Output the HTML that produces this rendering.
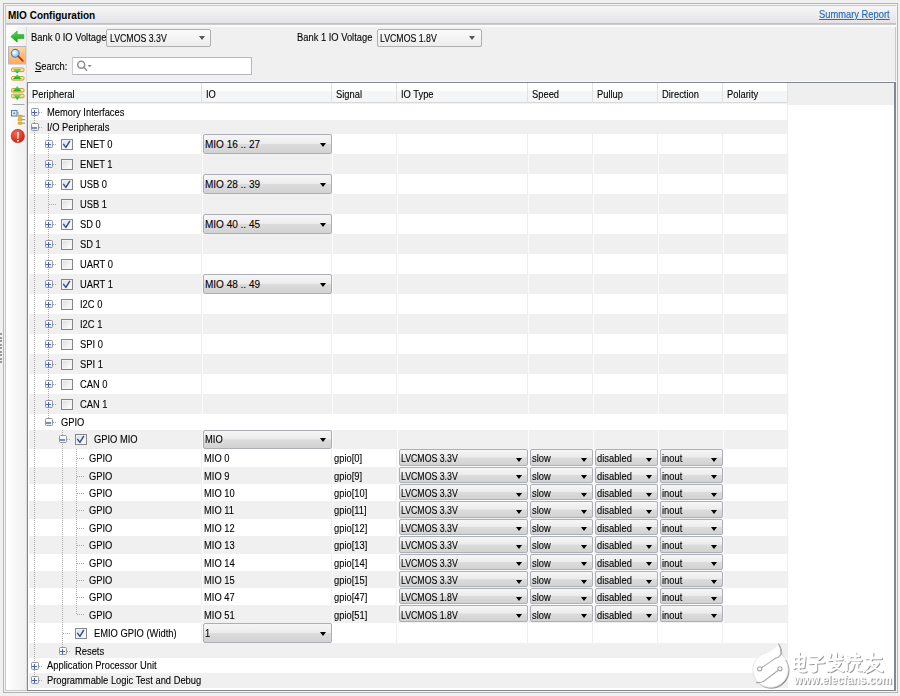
<!DOCTYPE html><html><head><meta charset="utf-8"><style>
html,body{margin:0;padding:0;}
body{width:900px;height:696px;overflow:hidden;background:#f0f0f0;position:relative;font-family:"Liberation Sans", sans-serif;color:#000;}
div{position:absolute;box-sizing:border-box;}
.t{white-space:nowrap;transform-origin:0 50%;-webkit-text-stroke:0.1px #000;}
.dd{border:1px solid #acafb6;border-radius:2px;background:linear-gradient(#f6f6f6 0%,#ececec 48%,#dcdcdc 52%,#d2d2d2 100%);}
.ar{width:0;height:0;border-left:3.5px solid transparent;border-right:3.5px solid transparent;border-top:4px solid #000;}
.dl{background-image:linear-gradient(#aaaaaa 50%,transparent 50%);background-size:1px 2px;width:1px;}
.dh{background-image:linear-gradient(90deg,#aaaaaa 50%,transparent 50%);background-size:2px 1px;height:1px;}
.ex{width:8px;height:8px;border:1px solid #959595;border-radius:1.5px;background:linear-gradient(#ffffff,#ececec);}
.cb{width:12px;height:11px;border:1px solid #858686;box-shadow:inset 0 0 0 1px #f4f4f4;background:linear-gradient(135deg,#dcdcdc,#f6f6f6 70%,#ffffff);}

</style></head><body>
<div style="left:3px;top:3px;width:895px;height:690px;border:1px solid #b4b4b4;"></div>
<div style="left:4px;top:4px;width:893px;height:688px;border:1px solid #f4f4f4;"></div>
<div style="left:5px;top:5px;width:891px;height:686px;border:1px solid #c8c8c8;"></div>
<div style="left:6px;top:6px;width:890px;height:17px;background:linear-gradient(#f6f6f6,#e4e4e8);"></div>
<div style="left:6px;top:23px;width:890px;height:1px;background:#c2c2c2;"></div>
<div style="left:6px;top:24px;width:890px;height:1px;background:#cbcbcb;"></div>
<div style="left:6px;top:25px;width:890px;height:2px;background:#fafafa;"></div>
<div class="t" style="left:8px;top:6px;line-height:20px;font-size:10px;transform:scaleX(1);font-weight:bold;color:#000;-webkit-text-stroke:0;">MIO Configuration</div>
<div class="t" style="left:819px;top:5px;line-height:20px;font-size:10px;transform:scaleX(0.935);color:#2a6ab8;text-decoration:underline;-webkit-text-stroke:0.15px #2a6ab8;">Summary Report</div>
<div style="left:6px;top:27px;width:20px;height:663px;background:linear-gradient(90deg,#ffffff,#f0f0f0);"></div>
<div style="left:26px;top:27px;width:1px;height:663px;background:#dcdcdc;"></div>
<div class="t" style="left:30.5px;top:28px;line-height:20px;font-size:10px;transform:scaleX(0.935);">Bank 0 IO Voltage</div>
<div style="left:106px;top:29px;width:105px;height:18px;border:1px solid #b0b0b0;background:linear-gradient(#fbfbfb,#ececec);border-radius:2px;"></div>
<div class="t" style="left:109.5px;top:29px;line-height:20px;font-size:10px;transform:scaleX(0.875);">LVCMOS 3.3V</div>
<div class="ar" style="left:199px;top:36px;border-top-color:#555;border-left-width:3.5px;border-right-width:3.5px;"></div>
<div class="t" style="left:297px;top:28px;line-height:20px;font-size:10px;transform:scaleX(0.935);">Bank 1 IO Voltage</div>
<div style="left:377px;top:29px;width:105px;height:18px;border:1px solid #b0b0b0;background:linear-gradient(#fbfbfb,#ececec);border-radius:2px;"></div>
<div class="t" style="left:380px;top:29px;line-height:20px;font-size:10px;transform:scaleX(0.875);">LVCMOS 1.8V</div>
<div class="ar" style="left:469px;top:36px;border-top-color:#555;"></div>
<div class="t" style="left:35px;top:57px;line-height:20px;font-size:10px;transform:scaleX(0.935);"><u>S</u>earch:</div>
<div style="left:72px;top:57px;width:180px;height:18px;border:1px solid #b4b7be;border-left-color:#c8ccd2;background:#fff;border-radius:1px;"></div>
<svg style="position:absolute;left:75px;top:59px" width="20" height="14"><circle cx="6.2" cy="5.7" r="3.5" fill="none" stroke="#8e8e8e" stroke-width="1.5"/><line x1="8.8" y1="8.3" x2="11.6" y2="11.2" stroke="#8e8e8e" stroke-width="1.5" stroke-linecap="round"/><path d="M12.5 5.9 L16.8 5.9 L14.65 8.2 Z" fill="#8a8a8a"/></svg>
<div style="left:27px;top:81px;width:869px;height:1px;background:#fafafa;"></div>
<div style="left:27px;top:82px;width:869px;height:609px;border:1px solid #82878f;border-right-width:2px;background:#fff;"></div>
<div style="left:28px;top:83px;width:866px;height:22px;background:#efefef;"></div>
<div style="left:28px;top:83px;width:173px;height:8px;background:#ffffff;"></div>
<div style="left:28px;top:91px;width:173px;height:11px;background:#f4f5f7;"></div>
<div style="left:28px;top:102px;width:174px;height:1px;background:#d8d8d8;"></div>
<div style="left:201px;top:83px;width:1px;height:20px;background:#e2e2e2;"></div>
<div class="t" style="left:31.5px;top:85px;line-height:20px;font-size:10px;transform:scaleX(0.935);">Peripheral</div>
<div style="left:202px;top:83px;width:129px;height:8px;background:#ffffff;"></div>
<div style="left:202px;top:91px;width:129px;height:11px;background:#f4f5f7;"></div>
<div style="left:202px;top:102px;width:130px;height:1px;background:#d8d8d8;"></div>
<div style="left:331px;top:83px;width:1px;height:20px;background:#e2e2e2;"></div>
<div class="t" style="left:205.5px;top:85px;line-height:20px;font-size:10px;transform:scaleX(0.935);">IO</div>
<div style="left:332px;top:83px;width:64px;height:8px;background:#ffffff;"></div>
<div style="left:332px;top:91px;width:64px;height:11px;background:#f4f5f7;"></div>
<div style="left:332px;top:102px;width:65px;height:1px;background:#d8d8d8;"></div>
<div style="left:396px;top:83px;width:1px;height:20px;background:#e2e2e2;"></div>
<div class="t" style="left:335.5px;top:85px;line-height:20px;font-size:10px;transform:scaleX(0.935);">Signal</div>
<div style="left:397px;top:83px;width:130px;height:8px;background:#ffffff;"></div>
<div style="left:397px;top:91px;width:130px;height:11px;background:#f4f5f7;"></div>
<div style="left:397px;top:102px;width:131px;height:1px;background:#d8d8d8;"></div>
<div style="left:527px;top:83px;width:1px;height:20px;background:#e2e2e2;"></div>
<div class="t" style="left:400.5px;top:85px;line-height:20px;font-size:10px;transform:scaleX(0.935);">IO Type</div>
<div style="left:528px;top:83px;width:64px;height:8px;background:#ffffff;"></div>
<div style="left:528px;top:91px;width:64px;height:11px;background:#f4f5f7;"></div>
<div style="left:528px;top:102px;width:65px;height:1px;background:#d8d8d8;"></div>
<div style="left:592px;top:83px;width:1px;height:20px;background:#e2e2e2;"></div>
<div class="t" style="left:531.5px;top:85px;line-height:20px;font-size:10px;transform:scaleX(0.935);">Speed</div>
<div style="left:593px;top:83px;width:64px;height:8px;background:#ffffff;"></div>
<div style="left:593px;top:91px;width:64px;height:11px;background:#f4f5f7;"></div>
<div style="left:593px;top:102px;width:65px;height:1px;background:#d8d8d8;"></div>
<div style="left:657px;top:83px;width:1px;height:20px;background:#e2e2e2;"></div>
<div class="t" style="left:596.5px;top:85px;line-height:20px;font-size:10px;transform:scaleX(0.935);">Pullup</div>
<div style="left:658px;top:83px;width:64px;height:8px;background:#ffffff;"></div>
<div style="left:658px;top:91px;width:64px;height:11px;background:#f4f5f7;"></div>
<div style="left:658px;top:102px;width:65px;height:1px;background:#d8d8d8;"></div>
<div style="left:722px;top:83px;width:1px;height:20px;background:#e2e2e2;"></div>
<div class="t" style="left:661.5px;top:85px;line-height:20px;font-size:10px;transform:scaleX(0.935);">Direction</div>
<div style="left:723px;top:83px;width:64px;height:8px;background:#ffffff;"></div>
<div style="left:723px;top:91px;width:64px;height:11px;background:#f4f5f7;"></div>
<div style="left:723px;top:102px;width:65px;height:1px;background:#d8d8d8;"></div>
<div style="left:787px;top:83px;width:1px;height:20px;background:#e2e2e2;"></div>
<div class="t" style="left:726.5px;top:85px;line-height:20px;font-size:10px;transform:scaleX(0.935);">Polarity</div>
<div style="left:28px;top:103px;width:760px;height:1px;background:#f2f2f2;"></div>
<div style="left:29px;top:104px;width:759px;height:15.5px;background:#ffffff;"></div>
<div style="left:787px;top:104px;width:1px;height:15.5px;background:#ededed;"></div>
<div style="left:29px;top:119.5px;width:759px;height:14.5px;background:#f0f0f0;"></div>
<div style="left:29px;top:134px;width:759px;height:20px;background:#ffffff;"></div>
<div style="left:787px;top:134px;width:1px;height:20px;background:#ededed;"></div>
<div style="left:201px;top:134px;width:1px;height:20px;background:#efefef;"></div>
<div style="left:331px;top:134px;width:1px;height:20px;background:#efefef;"></div>
<div style="left:396px;top:134px;width:1px;height:20px;background:#efefef;"></div>
<div style="left:527px;top:134px;width:1px;height:20px;background:#efefef;"></div>
<div style="left:592px;top:134px;width:1px;height:20px;background:#efefef;"></div>
<div style="left:657px;top:134px;width:1px;height:20px;background:#efefef;"></div>
<div style="left:722px;top:134px;width:1px;height:20px;background:#efefef;"></div>
<div style="left:787px;top:134px;width:1px;height:20px;background:#efefef;"></div>
<div style="left:29px;top:154px;width:759px;height:20px;background:#f0f0f0;"></div>
<div style="left:202px;top:154px;width:1px;height:20px;background:#fbfbfb;"></div>
<div style="left:332px;top:154px;width:1px;height:20px;background:#fbfbfb;"></div>
<div style="left:397px;top:154px;width:1px;height:20px;background:#fbfbfb;"></div>
<div style="left:528px;top:154px;width:1px;height:20px;background:#fbfbfb;"></div>
<div style="left:593px;top:154px;width:1px;height:20px;background:#fbfbfb;"></div>
<div style="left:658px;top:154px;width:1px;height:20px;background:#fbfbfb;"></div>
<div style="left:723px;top:154px;width:1px;height:20px;background:#fbfbfb;"></div>
<div style="left:788px;top:154px;width:1px;height:20px;background:#fbfbfb;"></div>
<div style="left:29px;top:174px;width:759px;height:20px;background:#ffffff;"></div>
<div style="left:787px;top:174px;width:1px;height:20px;background:#ededed;"></div>
<div style="left:201px;top:174px;width:1px;height:20px;background:#efefef;"></div>
<div style="left:331px;top:174px;width:1px;height:20px;background:#efefef;"></div>
<div style="left:396px;top:174px;width:1px;height:20px;background:#efefef;"></div>
<div style="left:527px;top:174px;width:1px;height:20px;background:#efefef;"></div>
<div style="left:592px;top:174px;width:1px;height:20px;background:#efefef;"></div>
<div style="left:657px;top:174px;width:1px;height:20px;background:#efefef;"></div>
<div style="left:722px;top:174px;width:1px;height:20px;background:#efefef;"></div>
<div style="left:787px;top:174px;width:1px;height:20px;background:#efefef;"></div>
<div style="left:29px;top:194px;width:759px;height:20px;background:#f0f0f0;"></div>
<div style="left:202px;top:194px;width:1px;height:20px;background:#fbfbfb;"></div>
<div style="left:332px;top:194px;width:1px;height:20px;background:#fbfbfb;"></div>
<div style="left:397px;top:194px;width:1px;height:20px;background:#fbfbfb;"></div>
<div style="left:528px;top:194px;width:1px;height:20px;background:#fbfbfb;"></div>
<div style="left:593px;top:194px;width:1px;height:20px;background:#fbfbfb;"></div>
<div style="left:658px;top:194px;width:1px;height:20px;background:#fbfbfb;"></div>
<div style="left:723px;top:194px;width:1px;height:20px;background:#fbfbfb;"></div>
<div style="left:788px;top:194px;width:1px;height:20px;background:#fbfbfb;"></div>
<div style="left:29px;top:214px;width:759px;height:20px;background:#ffffff;"></div>
<div style="left:787px;top:214px;width:1px;height:20px;background:#ededed;"></div>
<div style="left:201px;top:214px;width:1px;height:20px;background:#efefef;"></div>
<div style="left:331px;top:214px;width:1px;height:20px;background:#efefef;"></div>
<div style="left:396px;top:214px;width:1px;height:20px;background:#efefef;"></div>
<div style="left:527px;top:214px;width:1px;height:20px;background:#efefef;"></div>
<div style="left:592px;top:214px;width:1px;height:20px;background:#efefef;"></div>
<div style="left:657px;top:214px;width:1px;height:20px;background:#efefef;"></div>
<div style="left:722px;top:214px;width:1px;height:20px;background:#efefef;"></div>
<div style="left:787px;top:214px;width:1px;height:20px;background:#efefef;"></div>
<div style="left:29px;top:234px;width:759px;height:20px;background:#f0f0f0;"></div>
<div style="left:202px;top:234px;width:1px;height:20px;background:#fbfbfb;"></div>
<div style="left:332px;top:234px;width:1px;height:20px;background:#fbfbfb;"></div>
<div style="left:397px;top:234px;width:1px;height:20px;background:#fbfbfb;"></div>
<div style="left:528px;top:234px;width:1px;height:20px;background:#fbfbfb;"></div>
<div style="left:593px;top:234px;width:1px;height:20px;background:#fbfbfb;"></div>
<div style="left:658px;top:234px;width:1px;height:20px;background:#fbfbfb;"></div>
<div style="left:723px;top:234px;width:1px;height:20px;background:#fbfbfb;"></div>
<div style="left:788px;top:234px;width:1px;height:20px;background:#fbfbfb;"></div>
<div style="left:29px;top:254px;width:759px;height:20px;background:#ffffff;"></div>
<div style="left:787px;top:254px;width:1px;height:20px;background:#ededed;"></div>
<div style="left:201px;top:254px;width:1px;height:20px;background:#efefef;"></div>
<div style="left:331px;top:254px;width:1px;height:20px;background:#efefef;"></div>
<div style="left:396px;top:254px;width:1px;height:20px;background:#efefef;"></div>
<div style="left:527px;top:254px;width:1px;height:20px;background:#efefef;"></div>
<div style="left:592px;top:254px;width:1px;height:20px;background:#efefef;"></div>
<div style="left:657px;top:254px;width:1px;height:20px;background:#efefef;"></div>
<div style="left:722px;top:254px;width:1px;height:20px;background:#efefef;"></div>
<div style="left:787px;top:254px;width:1px;height:20px;background:#efefef;"></div>
<div style="left:29px;top:274px;width:759px;height:20px;background:#f0f0f0;"></div>
<div style="left:202px;top:274px;width:1px;height:20px;background:#fbfbfb;"></div>
<div style="left:332px;top:274px;width:1px;height:20px;background:#fbfbfb;"></div>
<div style="left:397px;top:274px;width:1px;height:20px;background:#fbfbfb;"></div>
<div style="left:528px;top:274px;width:1px;height:20px;background:#fbfbfb;"></div>
<div style="left:593px;top:274px;width:1px;height:20px;background:#fbfbfb;"></div>
<div style="left:658px;top:274px;width:1px;height:20px;background:#fbfbfb;"></div>
<div style="left:723px;top:274px;width:1px;height:20px;background:#fbfbfb;"></div>
<div style="left:788px;top:274px;width:1px;height:20px;background:#fbfbfb;"></div>
<div style="left:29px;top:294px;width:759px;height:20px;background:#ffffff;"></div>
<div style="left:787px;top:294px;width:1px;height:20px;background:#ededed;"></div>
<div style="left:201px;top:294px;width:1px;height:20px;background:#efefef;"></div>
<div style="left:331px;top:294px;width:1px;height:20px;background:#efefef;"></div>
<div style="left:396px;top:294px;width:1px;height:20px;background:#efefef;"></div>
<div style="left:527px;top:294px;width:1px;height:20px;background:#efefef;"></div>
<div style="left:592px;top:294px;width:1px;height:20px;background:#efefef;"></div>
<div style="left:657px;top:294px;width:1px;height:20px;background:#efefef;"></div>
<div style="left:722px;top:294px;width:1px;height:20px;background:#efefef;"></div>
<div style="left:787px;top:294px;width:1px;height:20px;background:#efefef;"></div>
<div style="left:29px;top:314px;width:759px;height:20px;background:#f0f0f0;"></div>
<div style="left:202px;top:314px;width:1px;height:20px;background:#fbfbfb;"></div>
<div style="left:332px;top:314px;width:1px;height:20px;background:#fbfbfb;"></div>
<div style="left:397px;top:314px;width:1px;height:20px;background:#fbfbfb;"></div>
<div style="left:528px;top:314px;width:1px;height:20px;background:#fbfbfb;"></div>
<div style="left:593px;top:314px;width:1px;height:20px;background:#fbfbfb;"></div>
<div style="left:658px;top:314px;width:1px;height:20px;background:#fbfbfb;"></div>
<div style="left:723px;top:314px;width:1px;height:20px;background:#fbfbfb;"></div>
<div style="left:788px;top:314px;width:1px;height:20px;background:#fbfbfb;"></div>
<div style="left:29px;top:334px;width:759px;height:20px;background:#ffffff;"></div>
<div style="left:787px;top:334px;width:1px;height:20px;background:#ededed;"></div>
<div style="left:201px;top:334px;width:1px;height:20px;background:#efefef;"></div>
<div style="left:331px;top:334px;width:1px;height:20px;background:#efefef;"></div>
<div style="left:396px;top:334px;width:1px;height:20px;background:#efefef;"></div>
<div style="left:527px;top:334px;width:1px;height:20px;background:#efefef;"></div>
<div style="left:592px;top:334px;width:1px;height:20px;background:#efefef;"></div>
<div style="left:657px;top:334px;width:1px;height:20px;background:#efefef;"></div>
<div style="left:722px;top:334px;width:1px;height:20px;background:#efefef;"></div>
<div style="left:787px;top:334px;width:1px;height:20px;background:#efefef;"></div>
<div style="left:29px;top:354px;width:759px;height:20px;background:#f0f0f0;"></div>
<div style="left:202px;top:354px;width:1px;height:20px;background:#fbfbfb;"></div>
<div style="left:332px;top:354px;width:1px;height:20px;background:#fbfbfb;"></div>
<div style="left:397px;top:354px;width:1px;height:20px;background:#fbfbfb;"></div>
<div style="left:528px;top:354px;width:1px;height:20px;background:#fbfbfb;"></div>
<div style="left:593px;top:354px;width:1px;height:20px;background:#fbfbfb;"></div>
<div style="left:658px;top:354px;width:1px;height:20px;background:#fbfbfb;"></div>
<div style="left:723px;top:354px;width:1px;height:20px;background:#fbfbfb;"></div>
<div style="left:788px;top:354px;width:1px;height:20px;background:#fbfbfb;"></div>
<div style="left:29px;top:374px;width:759px;height:20px;background:#ffffff;"></div>
<div style="left:787px;top:374px;width:1px;height:20px;background:#ededed;"></div>
<div style="left:201px;top:374px;width:1px;height:20px;background:#efefef;"></div>
<div style="left:331px;top:374px;width:1px;height:20px;background:#efefef;"></div>
<div style="left:396px;top:374px;width:1px;height:20px;background:#efefef;"></div>
<div style="left:527px;top:374px;width:1px;height:20px;background:#efefef;"></div>
<div style="left:592px;top:374px;width:1px;height:20px;background:#efefef;"></div>
<div style="left:657px;top:374px;width:1px;height:20px;background:#efefef;"></div>
<div style="left:722px;top:374px;width:1px;height:20px;background:#efefef;"></div>
<div style="left:787px;top:374px;width:1px;height:20px;background:#efefef;"></div>
<div style="left:29px;top:394px;width:759px;height:20px;background:#f0f0f0;"></div>
<div style="left:202px;top:394px;width:1px;height:20px;background:#fbfbfb;"></div>
<div style="left:332px;top:394px;width:1px;height:20px;background:#fbfbfb;"></div>
<div style="left:397px;top:394px;width:1px;height:20px;background:#fbfbfb;"></div>
<div style="left:528px;top:394px;width:1px;height:20px;background:#fbfbfb;"></div>
<div style="left:593px;top:394px;width:1px;height:20px;background:#fbfbfb;"></div>
<div style="left:658px;top:394px;width:1px;height:20px;background:#fbfbfb;"></div>
<div style="left:723px;top:394px;width:1px;height:20px;background:#fbfbfb;"></div>
<div style="left:788px;top:394px;width:1px;height:20px;background:#fbfbfb;"></div>
<div style="left:29px;top:414px;width:759px;height:15.5px;background:#ffffff;"></div>
<div style="left:787px;top:414px;width:1px;height:15.5px;background:#ededed;"></div>
<div style="left:29px;top:429.5px;width:759px;height:19.5px;background:#f0f0f0;"></div>
<div style="left:202px;top:429.5px;width:1px;height:19.5px;background:#fbfbfb;"></div>
<div style="left:332px;top:429.5px;width:1px;height:19.5px;background:#fbfbfb;"></div>
<div style="left:397px;top:429.5px;width:1px;height:19.5px;background:#fbfbfb;"></div>
<div style="left:528px;top:429.5px;width:1px;height:19.5px;background:#fbfbfb;"></div>
<div style="left:593px;top:429.5px;width:1px;height:19.5px;background:#fbfbfb;"></div>
<div style="left:658px;top:429.5px;width:1px;height:19.5px;background:#fbfbfb;"></div>
<div style="left:723px;top:429.5px;width:1px;height:19.5px;background:#fbfbfb;"></div>
<div style="left:788px;top:429.5px;width:1px;height:19.5px;background:#fbfbfb;"></div>
<div style="left:29px;top:449px;width:759px;height:18px;background:#ffffff;"></div>
<div style="left:787px;top:449px;width:1px;height:18px;background:#ededed;"></div>
<div style="left:201px;top:449px;width:1px;height:18px;background:#efefef;"></div>
<div style="left:331px;top:449px;width:1px;height:18px;background:#efefef;"></div>
<div style="left:396px;top:449px;width:1px;height:18px;background:#efefef;"></div>
<div style="left:527px;top:449px;width:1px;height:18px;background:#efefef;"></div>
<div style="left:592px;top:449px;width:1px;height:18px;background:#efefef;"></div>
<div style="left:657px;top:449px;width:1px;height:18px;background:#efefef;"></div>
<div style="left:722px;top:449px;width:1px;height:18px;background:#efefef;"></div>
<div style="left:787px;top:449px;width:1px;height:18px;background:#efefef;"></div>
<div style="left:29px;top:467px;width:759px;height:17px;background:#f0f0f0;"></div>
<div style="left:202px;top:467px;width:1px;height:17px;background:#fbfbfb;"></div>
<div style="left:332px;top:467px;width:1px;height:17px;background:#fbfbfb;"></div>
<div style="left:397px;top:467px;width:1px;height:17px;background:#fbfbfb;"></div>
<div style="left:528px;top:467px;width:1px;height:17px;background:#fbfbfb;"></div>
<div style="left:593px;top:467px;width:1px;height:17px;background:#fbfbfb;"></div>
<div style="left:658px;top:467px;width:1px;height:17px;background:#fbfbfb;"></div>
<div style="left:723px;top:467px;width:1px;height:17px;background:#fbfbfb;"></div>
<div style="left:788px;top:467px;width:1px;height:17px;background:#fbfbfb;"></div>
<div style="left:29px;top:484px;width:759px;height:17px;background:#ffffff;"></div>
<div style="left:787px;top:484px;width:1px;height:17px;background:#ededed;"></div>
<div style="left:201px;top:484px;width:1px;height:17px;background:#efefef;"></div>
<div style="left:331px;top:484px;width:1px;height:17px;background:#efefef;"></div>
<div style="left:396px;top:484px;width:1px;height:17px;background:#efefef;"></div>
<div style="left:527px;top:484px;width:1px;height:17px;background:#efefef;"></div>
<div style="left:592px;top:484px;width:1px;height:17px;background:#efefef;"></div>
<div style="left:657px;top:484px;width:1px;height:17px;background:#efefef;"></div>
<div style="left:722px;top:484px;width:1px;height:17px;background:#efefef;"></div>
<div style="left:787px;top:484px;width:1px;height:17px;background:#efefef;"></div>
<div style="left:29px;top:501px;width:759px;height:18px;background:#f0f0f0;"></div>
<div style="left:202px;top:501px;width:1px;height:18px;background:#fbfbfb;"></div>
<div style="left:332px;top:501px;width:1px;height:18px;background:#fbfbfb;"></div>
<div style="left:397px;top:501px;width:1px;height:18px;background:#fbfbfb;"></div>
<div style="left:528px;top:501px;width:1px;height:18px;background:#fbfbfb;"></div>
<div style="left:593px;top:501px;width:1px;height:18px;background:#fbfbfb;"></div>
<div style="left:658px;top:501px;width:1px;height:18px;background:#fbfbfb;"></div>
<div style="left:723px;top:501px;width:1px;height:18px;background:#fbfbfb;"></div>
<div style="left:788px;top:501px;width:1px;height:18px;background:#fbfbfb;"></div>
<div style="left:29px;top:519px;width:759px;height:17px;background:#ffffff;"></div>
<div style="left:787px;top:519px;width:1px;height:17px;background:#ededed;"></div>
<div style="left:201px;top:519px;width:1px;height:17px;background:#efefef;"></div>
<div style="left:331px;top:519px;width:1px;height:17px;background:#efefef;"></div>
<div style="left:396px;top:519px;width:1px;height:17px;background:#efefef;"></div>
<div style="left:527px;top:519px;width:1px;height:17px;background:#efefef;"></div>
<div style="left:592px;top:519px;width:1px;height:17px;background:#efefef;"></div>
<div style="left:657px;top:519px;width:1px;height:17px;background:#efefef;"></div>
<div style="left:722px;top:519px;width:1px;height:17px;background:#efefef;"></div>
<div style="left:787px;top:519px;width:1px;height:17px;background:#efefef;"></div>
<div style="left:29px;top:536px;width:759px;height:18px;background:#f0f0f0;"></div>
<div style="left:202px;top:536px;width:1px;height:18px;background:#fbfbfb;"></div>
<div style="left:332px;top:536px;width:1px;height:18px;background:#fbfbfb;"></div>
<div style="left:397px;top:536px;width:1px;height:18px;background:#fbfbfb;"></div>
<div style="left:528px;top:536px;width:1px;height:18px;background:#fbfbfb;"></div>
<div style="left:593px;top:536px;width:1px;height:18px;background:#fbfbfb;"></div>
<div style="left:658px;top:536px;width:1px;height:18px;background:#fbfbfb;"></div>
<div style="left:723px;top:536px;width:1px;height:18px;background:#fbfbfb;"></div>
<div style="left:788px;top:536px;width:1px;height:18px;background:#fbfbfb;"></div>
<div style="left:29px;top:554px;width:759px;height:17px;background:#ffffff;"></div>
<div style="left:787px;top:554px;width:1px;height:17px;background:#ededed;"></div>
<div style="left:201px;top:554px;width:1px;height:17px;background:#efefef;"></div>
<div style="left:331px;top:554px;width:1px;height:17px;background:#efefef;"></div>
<div style="left:396px;top:554px;width:1px;height:17px;background:#efefef;"></div>
<div style="left:527px;top:554px;width:1px;height:17px;background:#efefef;"></div>
<div style="left:592px;top:554px;width:1px;height:17px;background:#efefef;"></div>
<div style="left:657px;top:554px;width:1px;height:17px;background:#efefef;"></div>
<div style="left:722px;top:554px;width:1px;height:17px;background:#efefef;"></div>
<div style="left:787px;top:554px;width:1px;height:17px;background:#efefef;"></div>
<div style="left:29px;top:571px;width:759px;height:17px;background:#f0f0f0;"></div>
<div style="left:202px;top:571px;width:1px;height:17px;background:#fbfbfb;"></div>
<div style="left:332px;top:571px;width:1px;height:17px;background:#fbfbfb;"></div>
<div style="left:397px;top:571px;width:1px;height:17px;background:#fbfbfb;"></div>
<div style="left:528px;top:571px;width:1px;height:17px;background:#fbfbfb;"></div>
<div style="left:593px;top:571px;width:1px;height:17px;background:#fbfbfb;"></div>
<div style="left:658px;top:571px;width:1px;height:17px;background:#fbfbfb;"></div>
<div style="left:723px;top:571px;width:1px;height:17px;background:#fbfbfb;"></div>
<div style="left:788px;top:571px;width:1px;height:17px;background:#fbfbfb;"></div>
<div style="left:29px;top:588px;width:759px;height:17px;background:#ffffff;"></div>
<div style="left:787px;top:588px;width:1px;height:17px;background:#ededed;"></div>
<div style="left:201px;top:588px;width:1px;height:17px;background:#efefef;"></div>
<div style="left:331px;top:588px;width:1px;height:17px;background:#efefef;"></div>
<div style="left:396px;top:588px;width:1px;height:17px;background:#efefef;"></div>
<div style="left:527px;top:588px;width:1px;height:17px;background:#efefef;"></div>
<div style="left:592px;top:588px;width:1px;height:17px;background:#efefef;"></div>
<div style="left:657px;top:588px;width:1px;height:17px;background:#efefef;"></div>
<div style="left:722px;top:588px;width:1px;height:17px;background:#efefef;"></div>
<div style="left:787px;top:588px;width:1px;height:17px;background:#efefef;"></div>
<div style="left:29px;top:605px;width:759px;height:18px;background:#f0f0f0;"></div>
<div style="left:202px;top:605px;width:1px;height:18px;background:#fbfbfb;"></div>
<div style="left:332px;top:605px;width:1px;height:18px;background:#fbfbfb;"></div>
<div style="left:397px;top:605px;width:1px;height:18px;background:#fbfbfb;"></div>
<div style="left:528px;top:605px;width:1px;height:18px;background:#fbfbfb;"></div>
<div style="left:593px;top:605px;width:1px;height:18px;background:#fbfbfb;"></div>
<div style="left:658px;top:605px;width:1px;height:18px;background:#fbfbfb;"></div>
<div style="left:723px;top:605px;width:1px;height:18px;background:#fbfbfb;"></div>
<div style="left:788px;top:605px;width:1px;height:18px;background:#fbfbfb;"></div>
<div style="left:29px;top:623px;width:759px;height:20px;background:#ffffff;"></div>
<div style="left:787px;top:623px;width:1px;height:20px;background:#ededed;"></div>
<div style="left:201px;top:623px;width:1px;height:20px;background:#efefef;"></div>
<div style="left:331px;top:623px;width:1px;height:20px;background:#efefef;"></div>
<div style="left:396px;top:623px;width:1px;height:20px;background:#efefef;"></div>
<div style="left:527px;top:623px;width:1px;height:20px;background:#efefef;"></div>
<div style="left:592px;top:623px;width:1px;height:20px;background:#efefef;"></div>
<div style="left:657px;top:623px;width:1px;height:20px;background:#efefef;"></div>
<div style="left:722px;top:623px;width:1px;height:20px;background:#efefef;"></div>
<div style="left:787px;top:623px;width:1px;height:20px;background:#efefef;"></div>
<div style="left:29px;top:643px;width:759px;height:15px;background:#f0f0f0;"></div>
<div style="left:29px;top:658px;width:759px;height:14.5px;background:#ffffff;"></div>
<div style="left:787px;top:658px;width:1px;height:14.5px;background:#ededed;"></div>
<div style="left:29px;top:672.5px;width:759px;height:15px;background:#f0f0f0;"></div>
<div class="dl" style="left:34px;top:111.75px;height:568.25px;"></div>
<div class="dl" style="left:48px;top:133px;height:288.75px;"></div>
<div class="dl" style="left:62px;top:429.5px;height:221.0px;"></div>
<div class="dl" style="left:76px;top:449px;height:165.0px;"></div>
<div class="dh" style="left:35px;top:112px;width:7px;"></div>
<div class="ex" style="left:31px;top:108px;"></div>
<div style="left:32px;top:112px;width:5px;height:1px;background:#4563ae;"></div>
<div style="left:34px;top:110px;width:1px;height:5px;background:#4563ae;"></div>
<div class="t" style="left:47px;top:103px;line-height:20px;font-size:10px;transform:scaleX(0.935);">Memory Interfaces</div>
<div class="dh" style="left:35px;top:127px;width:7px;"></div>
<div class="ex" style="left:31px;top:123px;"></div>
<div style="left:32px;top:127px;width:5px;height:2px;background:#7b8cc8;"></div>
<div class="t" style="left:47px;top:118px;line-height:20px;font-size:10px;transform:scaleX(0.935);">I/O Peripherals</div>
<div class="dh" style="left:49px;top:144px;width:7px;"></div>
<div class="ex" style="left:45px;top:140px;"></div>
<div style="left:46px;top:144px;width:5px;height:1px;background:#4563ae;"></div>
<div style="left:48px;top:142px;width:1px;height:5px;background:#4563ae;"></div>
<div class="cb" style="left:61px;top:139px;"></div>
<svg style="position:absolute;left:61px;top:139px" width="11" height="11"><path d="M2.6 5.4 L4.9 8.4 L8.6 2.4" fill="none" stroke="#2d4f9e" stroke-width="1.5" stroke-linecap="round" stroke-linejoin="round"/></svg>
<div class="t" style="left:80px;top:135px;line-height:20px;font-size:10px;transform:scaleX(0.935);">ENET 0</div>
<div class="dd" style="left:203px;top:134px;width:129px;height:20px;"></div>
<div class="t" style="left:205px;top:135px;line-height:20px;font-size:10px;transform:scaleX(1.0);">MIO 16 .. 27</div>
<div class="ar" style="left:320px;top:143px;"></div>
<div class="dh" style="left:49px;top:164px;width:7px;"></div>
<div class="ex" style="left:45px;top:160px;"></div>
<div style="left:46px;top:164px;width:5px;height:1px;background:#4563ae;"></div>
<div style="left:48px;top:162px;width:1px;height:5px;background:#4563ae;"></div>
<div class="cb" style="left:61px;top:159px;"></div>
<div class="t" style="left:80px;top:155px;line-height:20px;font-size:10px;transform:scaleX(0.935);">ENET 1</div>
<div class="dh" style="left:49px;top:184px;width:7px;"></div>
<div class="ex" style="left:45px;top:180px;"></div>
<div style="left:46px;top:184px;width:5px;height:1px;background:#4563ae;"></div>
<div style="left:48px;top:182px;width:1px;height:5px;background:#4563ae;"></div>
<div class="cb" style="left:61px;top:179px;"></div>
<svg style="position:absolute;left:61px;top:179px" width="11" height="11"><path d="M2.6 5.4 L4.9 8.4 L8.6 2.4" fill="none" stroke="#2d4f9e" stroke-width="1.5" stroke-linecap="round" stroke-linejoin="round"/></svg>
<div class="t" style="left:80px;top:175px;line-height:20px;font-size:10px;transform:scaleX(0.935);">USB 0</div>
<div class="dd" style="left:203px;top:174px;width:129px;height:20px;"></div>
<div class="t" style="left:205px;top:175px;line-height:20px;font-size:10px;transform:scaleX(1.0);">MIO 28 .. 39</div>
<div class="ar" style="left:320px;top:183px;"></div>
<div class="dh" style="left:49px;top:204px;width:7px;"></div>
<div class="cb" style="left:61px;top:199px;"></div>
<div class="t" style="left:80px;top:195px;line-height:20px;font-size:10px;transform:scaleX(0.935);">USB 1</div>
<div class="dh" style="left:49px;top:224px;width:7px;"></div>
<div class="ex" style="left:45px;top:220px;"></div>
<div style="left:46px;top:224px;width:5px;height:1px;background:#4563ae;"></div>
<div style="left:48px;top:222px;width:1px;height:5px;background:#4563ae;"></div>
<div class="cb" style="left:61px;top:219px;"></div>
<svg style="position:absolute;left:61px;top:219px" width="11" height="11"><path d="M2.6 5.4 L4.9 8.4 L8.6 2.4" fill="none" stroke="#2d4f9e" stroke-width="1.5" stroke-linecap="round" stroke-linejoin="round"/></svg>
<div class="t" style="left:80px;top:215px;line-height:20px;font-size:10px;transform:scaleX(0.935);">SD 0</div>
<div class="dd" style="left:203px;top:214px;width:129px;height:20px;"></div>
<div class="t" style="left:205px;top:215px;line-height:20px;font-size:10px;transform:scaleX(1.0);">MIO 40 .. 45</div>
<div class="ar" style="left:320px;top:223px;"></div>
<div class="dh" style="left:49px;top:244px;width:7px;"></div>
<div class="ex" style="left:45px;top:240px;"></div>
<div style="left:46px;top:244px;width:5px;height:1px;background:#4563ae;"></div>
<div style="left:48px;top:242px;width:1px;height:5px;background:#4563ae;"></div>
<div class="cb" style="left:61px;top:239px;"></div>
<div class="t" style="left:80px;top:235px;line-height:20px;font-size:10px;transform:scaleX(0.935);">SD 1</div>
<div class="dh" style="left:49px;top:264px;width:7px;"></div>
<div class="ex" style="left:45px;top:260px;"></div>
<div style="left:46px;top:264px;width:5px;height:1px;background:#4563ae;"></div>
<div style="left:48px;top:262px;width:1px;height:5px;background:#4563ae;"></div>
<div class="cb" style="left:61px;top:259px;"></div>
<div class="t" style="left:80px;top:255px;line-height:20px;font-size:10px;transform:scaleX(0.935);">UART 0</div>
<div class="dh" style="left:49px;top:284px;width:7px;"></div>
<div class="ex" style="left:45px;top:280px;"></div>
<div style="left:46px;top:284px;width:5px;height:1px;background:#4563ae;"></div>
<div style="left:48px;top:282px;width:1px;height:5px;background:#4563ae;"></div>
<div class="cb" style="left:61px;top:279px;"></div>
<svg style="position:absolute;left:61px;top:279px" width="11" height="11"><path d="M2.6 5.4 L4.9 8.4 L8.6 2.4" fill="none" stroke="#2d4f9e" stroke-width="1.5" stroke-linecap="round" stroke-linejoin="round"/></svg>
<div class="t" style="left:80px;top:275px;line-height:20px;font-size:10px;transform:scaleX(0.935);">UART 1</div>
<div class="dd" style="left:203px;top:274px;width:129px;height:20px;"></div>
<div class="t" style="left:205px;top:275px;line-height:20px;font-size:10px;transform:scaleX(1.0);">MIO 48 .. 49</div>
<div class="ar" style="left:320px;top:283px;"></div>
<div class="dh" style="left:49px;top:304px;width:7px;"></div>
<div class="ex" style="left:45px;top:300px;"></div>
<div style="left:46px;top:304px;width:5px;height:1px;background:#4563ae;"></div>
<div style="left:48px;top:302px;width:1px;height:5px;background:#4563ae;"></div>
<div class="cb" style="left:61px;top:299px;"></div>
<div class="t" style="left:80px;top:295px;line-height:20px;font-size:10px;transform:scaleX(0.935);">I2C 0</div>
<div class="dh" style="left:49px;top:324px;width:7px;"></div>
<div class="ex" style="left:45px;top:320px;"></div>
<div style="left:46px;top:324px;width:5px;height:1px;background:#4563ae;"></div>
<div style="left:48px;top:322px;width:1px;height:5px;background:#4563ae;"></div>
<div class="cb" style="left:61px;top:319px;"></div>
<div class="t" style="left:80px;top:315px;line-height:20px;font-size:10px;transform:scaleX(0.935);">I2C 1</div>
<div class="dh" style="left:49px;top:344px;width:7px;"></div>
<div class="ex" style="left:45px;top:340px;"></div>
<div style="left:46px;top:344px;width:5px;height:1px;background:#4563ae;"></div>
<div style="left:48px;top:342px;width:1px;height:5px;background:#4563ae;"></div>
<div class="cb" style="left:61px;top:339px;"></div>
<div class="t" style="left:80px;top:335px;line-height:20px;font-size:10px;transform:scaleX(0.935);">SPI 0</div>
<div class="dh" style="left:49px;top:364px;width:7px;"></div>
<div class="ex" style="left:45px;top:360px;"></div>
<div style="left:46px;top:364px;width:5px;height:1px;background:#4563ae;"></div>
<div style="left:48px;top:362px;width:1px;height:5px;background:#4563ae;"></div>
<div class="cb" style="left:61px;top:359px;"></div>
<div class="t" style="left:80px;top:355px;line-height:20px;font-size:10px;transform:scaleX(0.935);">SPI 1</div>
<div class="dh" style="left:49px;top:384px;width:7px;"></div>
<div class="ex" style="left:45px;top:380px;"></div>
<div style="left:46px;top:384px;width:5px;height:1px;background:#4563ae;"></div>
<div style="left:48px;top:382px;width:1px;height:5px;background:#4563ae;"></div>
<div class="cb" style="left:61px;top:379px;"></div>
<div class="t" style="left:80px;top:375px;line-height:20px;font-size:10px;transform:scaleX(0.935);">CAN 0</div>
<div class="dh" style="left:49px;top:404px;width:7px;"></div>
<div class="ex" style="left:45px;top:400px;"></div>
<div style="left:46px;top:404px;width:5px;height:1px;background:#4563ae;"></div>
<div style="left:48px;top:402px;width:1px;height:5px;background:#4563ae;"></div>
<div class="cb" style="left:61px;top:399px;"></div>
<div class="t" style="left:80px;top:395px;line-height:20px;font-size:10px;transform:scaleX(0.935);">CAN 1</div>
<div class="dh" style="left:49px;top:422px;width:7px;"></div>
<div class="ex" style="left:45px;top:418px;"></div>
<div style="left:46px;top:422px;width:5px;height:2px;background:#7b8cc8;"></div>
<div class="t" style="left:61px;top:413px;line-height:20px;font-size:10px;transform:scaleX(0.935);">GPIO</div>
<div class="dh" style="left:63px;top:439px;width:7px;"></div>
<div class="ex" style="left:59px;top:435px;"></div>
<div style="left:60px;top:439px;width:5px;height:2px;background:#7b8cc8;"></div>
<div class="cb" style="left:75px;top:434px;"></div>
<svg style="position:absolute;left:75px;top:434px" width="11" height="11"><path d="M2.6 5.4 L4.9 8.4 L8.6 2.4" fill="none" stroke="#2d4f9e" stroke-width="1.5" stroke-linecap="round" stroke-linejoin="round"/></svg>
<div class="t" style="left:94px;top:430px;line-height:20px;font-size:10px;transform:scaleX(0.935);">GPIO MIO</div>
<div class="dd" style="left:203px;top:429.5px;width:129px;height:19.5px;"></div>
<div class="t" style="left:205px;top:430px;line-height:20px;font-size:10px;transform:scaleX(0.935);">MIO</div>
<div class="ar" style="left:320px;top:438px;"></div>
<div class="dh" style="left:77px;top:458px;width:7px;"></div>
<div class="t" style="left:89px;top:449px;line-height:20px;font-size:10px;transform:scaleX(0.935);">GPIO</div>
<div class="t" style="left:204px;top:449px;line-height:20px;font-size:10px;transform:scaleX(0.935);">MIO 0</div>
<div class="t" style="left:334px;top:449px;line-height:20px;font-size:10px;transform:scaleX(0.935);">gpio[0]</div>
<div class="dd" style="left:399px;top:449px;width:129px;height:17px;"></div>
<div class="t" style="left:401px;top:449px;line-height:20px;font-size:10px;transform:scaleX(0.875);">LVCMOS 3.3V</div>
<div class="ar" style="left:516px;top:458px;"></div>
<div class="dd" style="left:530px;top:449px;width:63px;height:17px;"></div>
<div class="t" style="left:532px;top:449px;line-height:20px;font-size:10px;transform:scaleX(0.935);">slow</div>
<div class="ar" style="left:581px;top:458px;"></div>
<div class="dd" style="left:595px;top:449px;width:63px;height:17px;"></div>
<div class="t" style="left:597px;top:449px;line-height:20px;font-size:10px;transform:scaleX(0.935);">disabled</div>
<div class="ar" style="left:646px;top:458px;"></div>
<div class="dd" style="left:660px;top:449px;width:63px;height:17px;"></div>
<div class="t" style="left:662px;top:449px;line-height:20px;font-size:10px;transform:scaleX(0.935);">inout</div>
<div class="ar" style="left:711px;top:458px;"></div>
<div class="dh" style="left:77px;top:476px;width:7px;"></div>
<div class="t" style="left:89px;top:467px;line-height:20px;font-size:10px;transform:scaleX(0.935);">GPIO</div>
<div class="t" style="left:204px;top:467px;line-height:20px;font-size:10px;transform:scaleX(0.935);">MIO 9</div>
<div class="t" style="left:334px;top:467px;line-height:20px;font-size:10px;transform:scaleX(0.935);">gpio[9]</div>
<div class="dd" style="left:399px;top:467px;width:129px;height:16px;"></div>
<div class="t" style="left:401px;top:467px;line-height:20px;font-size:10px;transform:scaleX(0.875);">LVCMOS 3.3V</div>
<div class="ar" style="left:516px;top:475px;"></div>
<div class="dd" style="left:530px;top:467px;width:63px;height:16px;"></div>
<div class="t" style="left:532px;top:467px;line-height:20px;font-size:10px;transform:scaleX(0.935);">slow</div>
<div class="ar" style="left:581px;top:475px;"></div>
<div class="dd" style="left:595px;top:467px;width:63px;height:16px;"></div>
<div class="t" style="left:597px;top:467px;line-height:20px;font-size:10px;transform:scaleX(0.935);">disabled</div>
<div class="ar" style="left:646px;top:475px;"></div>
<div class="dd" style="left:660px;top:467px;width:63px;height:16px;"></div>
<div class="t" style="left:662px;top:467px;line-height:20px;font-size:10px;transform:scaleX(0.935);">inout</div>
<div class="ar" style="left:711px;top:475px;"></div>
<div class="dh" style="left:77px;top:493px;width:7px;"></div>
<div class="t" style="left:89px;top:484px;line-height:20px;font-size:10px;transform:scaleX(0.935);">GPIO</div>
<div class="t" style="left:204px;top:484px;line-height:20px;font-size:10px;transform:scaleX(0.935);">MIO 10</div>
<div class="t" style="left:334px;top:484px;line-height:20px;font-size:10px;transform:scaleX(0.935);">gpio[10]</div>
<div class="dd" style="left:399px;top:484px;width:129px;height:16px;"></div>
<div class="t" style="left:401px;top:484px;line-height:20px;font-size:10px;transform:scaleX(0.875);">LVCMOS 3.3V</div>
<div class="ar" style="left:516px;top:493px;"></div>
<div class="dd" style="left:530px;top:484px;width:63px;height:16px;"></div>
<div class="t" style="left:532px;top:484px;line-height:20px;font-size:10px;transform:scaleX(0.935);">slow</div>
<div class="ar" style="left:581px;top:493px;"></div>
<div class="dd" style="left:595px;top:484px;width:63px;height:16px;"></div>
<div class="t" style="left:597px;top:484px;line-height:20px;font-size:10px;transform:scaleX(0.935);">disabled</div>
<div class="ar" style="left:646px;top:493px;"></div>
<div class="dd" style="left:660px;top:484px;width:63px;height:16px;"></div>
<div class="t" style="left:662px;top:484px;line-height:20px;font-size:10px;transform:scaleX(0.935);">inout</div>
<div class="ar" style="left:711px;top:493px;"></div>
<div class="dh" style="left:77px;top:510px;width:7px;"></div>
<div class="t" style="left:89px;top:501px;line-height:20px;font-size:10px;transform:scaleX(0.935);">GPIO</div>
<div class="t" style="left:204px;top:501px;line-height:20px;font-size:10px;transform:scaleX(0.935);">MIO 11</div>
<div class="t" style="left:334px;top:501px;line-height:20px;font-size:10px;transform:scaleX(0.935);">gpio[11]</div>
<div class="dd" style="left:399px;top:501px;width:129px;height:17px;"></div>
<div class="t" style="left:401px;top:501px;line-height:20px;font-size:10px;transform:scaleX(0.875);">LVCMOS 3.3V</div>
<div class="ar" style="left:516px;top:510px;"></div>
<div class="dd" style="left:530px;top:501px;width:63px;height:17px;"></div>
<div class="t" style="left:532px;top:501px;line-height:20px;font-size:10px;transform:scaleX(0.935);">slow</div>
<div class="ar" style="left:581px;top:510px;"></div>
<div class="dd" style="left:595px;top:501px;width:63px;height:17px;"></div>
<div class="t" style="left:597px;top:501px;line-height:20px;font-size:10px;transform:scaleX(0.935);">disabled</div>
<div class="ar" style="left:646px;top:510px;"></div>
<div class="dd" style="left:660px;top:501px;width:63px;height:17px;"></div>
<div class="t" style="left:662px;top:501px;line-height:20px;font-size:10px;transform:scaleX(0.935);">inout</div>
<div class="ar" style="left:711px;top:510px;"></div>
<div class="dh" style="left:77px;top:528px;width:7px;"></div>
<div class="t" style="left:89px;top:519px;line-height:20px;font-size:10px;transform:scaleX(0.935);">GPIO</div>
<div class="t" style="left:204px;top:519px;line-height:20px;font-size:10px;transform:scaleX(0.935);">MIO 12</div>
<div class="t" style="left:334px;top:519px;line-height:20px;font-size:10px;transform:scaleX(0.935);">gpio[12]</div>
<div class="dd" style="left:399px;top:519px;width:129px;height:16px;"></div>
<div class="t" style="left:401px;top:519px;line-height:20px;font-size:10px;transform:scaleX(0.875);">LVCMOS 3.3V</div>
<div class="ar" style="left:516px;top:527px;"></div>
<div class="dd" style="left:530px;top:519px;width:63px;height:16px;"></div>
<div class="t" style="left:532px;top:519px;line-height:20px;font-size:10px;transform:scaleX(0.935);">slow</div>
<div class="ar" style="left:581px;top:527px;"></div>
<div class="dd" style="left:595px;top:519px;width:63px;height:16px;"></div>
<div class="t" style="left:597px;top:519px;line-height:20px;font-size:10px;transform:scaleX(0.935);">disabled</div>
<div class="ar" style="left:646px;top:527px;"></div>
<div class="dd" style="left:660px;top:519px;width:63px;height:16px;"></div>
<div class="t" style="left:662px;top:519px;line-height:20px;font-size:10px;transform:scaleX(0.935);">inout</div>
<div class="ar" style="left:711px;top:527px;"></div>
<div class="dh" style="left:77px;top:545px;width:7px;"></div>
<div class="t" style="left:89px;top:536px;line-height:20px;font-size:10px;transform:scaleX(0.935);">GPIO</div>
<div class="t" style="left:204px;top:536px;line-height:20px;font-size:10px;transform:scaleX(0.935);">MIO 13</div>
<div class="t" style="left:334px;top:536px;line-height:20px;font-size:10px;transform:scaleX(0.935);">gpio[13]</div>
<div class="dd" style="left:399px;top:536px;width:129px;height:17px;"></div>
<div class="t" style="left:401px;top:536px;line-height:20px;font-size:10px;transform:scaleX(0.875);">LVCMOS 3.3V</div>
<div class="ar" style="left:516px;top:545px;"></div>
<div class="dd" style="left:530px;top:536px;width:63px;height:17px;"></div>
<div class="t" style="left:532px;top:536px;line-height:20px;font-size:10px;transform:scaleX(0.935);">slow</div>
<div class="ar" style="left:581px;top:545px;"></div>
<div class="dd" style="left:595px;top:536px;width:63px;height:17px;"></div>
<div class="t" style="left:597px;top:536px;line-height:20px;font-size:10px;transform:scaleX(0.935);">disabled</div>
<div class="ar" style="left:646px;top:545px;"></div>
<div class="dd" style="left:660px;top:536px;width:63px;height:17px;"></div>
<div class="t" style="left:662px;top:536px;line-height:20px;font-size:10px;transform:scaleX(0.935);">inout</div>
<div class="ar" style="left:711px;top:545px;"></div>
<div class="dh" style="left:77px;top:563px;width:7px;"></div>
<div class="t" style="left:89px;top:554px;line-height:20px;font-size:10px;transform:scaleX(0.935);">GPIO</div>
<div class="t" style="left:204px;top:554px;line-height:20px;font-size:10px;transform:scaleX(0.935);">MIO 14</div>
<div class="t" style="left:334px;top:554px;line-height:20px;font-size:10px;transform:scaleX(0.935);">gpio[14]</div>
<div class="dd" style="left:399px;top:554px;width:129px;height:16px;"></div>
<div class="t" style="left:401px;top:554px;line-height:20px;font-size:10px;transform:scaleX(0.875);">LVCMOS 3.3V</div>
<div class="ar" style="left:516px;top:562px;"></div>
<div class="dd" style="left:530px;top:554px;width:63px;height:16px;"></div>
<div class="t" style="left:532px;top:554px;line-height:20px;font-size:10px;transform:scaleX(0.935);">slow</div>
<div class="ar" style="left:581px;top:562px;"></div>
<div class="dd" style="left:595px;top:554px;width:63px;height:16px;"></div>
<div class="t" style="left:597px;top:554px;line-height:20px;font-size:10px;transform:scaleX(0.935);">disabled</div>
<div class="ar" style="left:646px;top:562px;"></div>
<div class="dd" style="left:660px;top:554px;width:63px;height:16px;"></div>
<div class="t" style="left:662px;top:554px;line-height:20px;font-size:10px;transform:scaleX(0.935);">inout</div>
<div class="ar" style="left:711px;top:562px;"></div>
<div class="dh" style="left:77px;top:580px;width:7px;"></div>
<div class="t" style="left:89px;top:571px;line-height:20px;font-size:10px;transform:scaleX(0.935);">GPIO</div>
<div class="t" style="left:204px;top:571px;line-height:20px;font-size:10px;transform:scaleX(0.935);">MIO 15</div>
<div class="t" style="left:334px;top:571px;line-height:20px;font-size:10px;transform:scaleX(0.935);">gpio[15]</div>
<div class="dd" style="left:399px;top:571px;width:129px;height:16px;"></div>
<div class="t" style="left:401px;top:571px;line-height:20px;font-size:10px;transform:scaleX(0.875);">LVCMOS 3.3V</div>
<div class="ar" style="left:516px;top:580px;"></div>
<div class="dd" style="left:530px;top:571px;width:63px;height:16px;"></div>
<div class="t" style="left:532px;top:571px;line-height:20px;font-size:10px;transform:scaleX(0.935);">slow</div>
<div class="ar" style="left:581px;top:580px;"></div>
<div class="dd" style="left:595px;top:571px;width:63px;height:16px;"></div>
<div class="t" style="left:597px;top:571px;line-height:20px;font-size:10px;transform:scaleX(0.935);">disabled</div>
<div class="ar" style="left:646px;top:580px;"></div>
<div class="dd" style="left:660px;top:571px;width:63px;height:16px;"></div>
<div class="t" style="left:662px;top:571px;line-height:20px;font-size:10px;transform:scaleX(0.935);">inout</div>
<div class="ar" style="left:711px;top:580px;"></div>
<div class="dh" style="left:77px;top:597px;width:7px;"></div>
<div class="t" style="left:89px;top:588px;line-height:20px;font-size:10px;transform:scaleX(0.935);">GPIO</div>
<div class="t" style="left:204px;top:588px;line-height:20px;font-size:10px;transform:scaleX(0.935);">MIO 47</div>
<div class="t" style="left:334px;top:588px;line-height:20px;font-size:10px;transform:scaleX(0.935);">gpio[47]</div>
<div class="dd" style="left:399px;top:588px;width:129px;height:16px;"></div>
<div class="t" style="left:401px;top:588px;line-height:20px;font-size:10px;transform:scaleX(0.875);">LVCMOS 1.8V</div>
<div class="ar" style="left:516px;top:597px;"></div>
<div class="dd" style="left:530px;top:588px;width:63px;height:16px;"></div>
<div class="t" style="left:532px;top:588px;line-height:20px;font-size:10px;transform:scaleX(0.935);">slow</div>
<div class="ar" style="left:581px;top:597px;"></div>
<div class="dd" style="left:595px;top:588px;width:63px;height:16px;"></div>
<div class="t" style="left:597px;top:588px;line-height:20px;font-size:10px;transform:scaleX(0.935);">disabled</div>
<div class="ar" style="left:646px;top:597px;"></div>
<div class="dd" style="left:660px;top:588px;width:63px;height:16px;"></div>
<div class="t" style="left:662px;top:588px;line-height:20px;font-size:10px;transform:scaleX(0.935);">inout</div>
<div class="ar" style="left:711px;top:597px;"></div>
<div class="dh" style="left:77px;top:614px;width:7px;"></div>
<div class="t" style="left:89px;top:606px;line-height:20px;font-size:10px;transform:scaleX(0.935);">GPIO</div>
<div class="t" style="left:204px;top:606px;line-height:20px;font-size:10px;transform:scaleX(0.935);">MIO 51</div>
<div class="t" style="left:334px;top:606px;line-height:20px;font-size:10px;transform:scaleX(0.935);">gpio[51]</div>
<div class="dd" style="left:399px;top:605px;width:129px;height:17px;"></div>
<div class="t" style="left:401px;top:606px;line-height:20px;font-size:10px;transform:scaleX(0.875);">LVCMOS 1.8V</div>
<div class="ar" style="left:516px;top:614px;"></div>
<div class="dd" style="left:530px;top:605px;width:63px;height:17px;"></div>
<div class="t" style="left:532px;top:606px;line-height:20px;font-size:10px;transform:scaleX(0.935);">slow</div>
<div class="ar" style="left:581px;top:614px;"></div>
<div class="dd" style="left:595px;top:605px;width:63px;height:17px;"></div>
<div class="t" style="left:597px;top:606px;line-height:20px;font-size:10px;transform:scaleX(0.935);">disabled</div>
<div class="ar" style="left:646px;top:614px;"></div>
<div class="dd" style="left:660px;top:605px;width:63px;height:17px;"></div>
<div class="t" style="left:662px;top:606px;line-height:20px;font-size:10px;transform:scaleX(0.935);">inout</div>
<div class="ar" style="left:711px;top:614px;"></div>
<div class="dh" style="left:63px;top:633px;width:7px;"></div>
<div class="cb" style="left:75px;top:628px;"></div>
<svg style="position:absolute;left:75px;top:628px" width="11" height="11"><path d="M2.6 5.4 L4.9 8.4 L8.6 2.4" fill="none" stroke="#2d4f9e" stroke-width="1.5" stroke-linecap="round" stroke-linejoin="round"/></svg>
<div class="t" style="left:94px;top:624px;line-height:20px;font-size:10px;transform:scaleX(0.935);">EMIO GPIO (Width)</div>
<div class="dd" style="left:203px;top:623px;width:129px;height:20px;"></div>
<div class="t" style="left:205px;top:624px;line-height:20px;font-size:10px;transform:scaleX(0.935);">1</div>
<div class="ar" style="left:320px;top:632px;"></div>
<div class="dh" style="left:63px;top:651px;width:7px;"></div>
<div class="ex" style="left:59px;top:647px;"></div>
<div style="left:60px;top:651px;width:5px;height:1px;background:#4563ae;"></div>
<div style="left:62px;top:649px;width:1px;height:5px;background:#4563ae;"></div>
<div class="t" style="left:75px;top:642px;line-height:20px;font-size:10px;transform:scaleX(0.935);">Resets</div>
<div class="dh" style="left:35px;top:666px;width:7px;"></div>
<div class="ex" style="left:31px;top:662px;"></div>
<div style="left:32px;top:666px;width:5px;height:1px;background:#4563ae;"></div>
<div style="left:34px;top:664px;width:1px;height:5px;background:#4563ae;"></div>
<div class="t" style="left:47px;top:656px;line-height:20px;font-size:10px;transform:scaleX(0.935);">Application Processor Unit</div>
<div class="dh" style="left:35px;top:680px;width:7px;"></div>
<div class="ex" style="left:31px;top:676px;"></div>
<div style="left:32px;top:680px;width:5px;height:1px;background:#4563ae;"></div>
<div style="left:34px;top:678px;width:1px;height:5px;background:#4563ae;"></div>
<div class="t" style="left:47px;top:671px;line-height:20px;font-size:10px;transform:scaleX(0.935);">Programmable Logic Test and Debug</div>
<svg style="position:absolute;left:6px;top:26px" width="20" height="120">
<defs>
<linearGradient id="gA" x1="0" y1="0" x2="0" y2="1"><stop offset="0" stop-color="#5ee05e"/><stop offset="1" stop-color="#0c9a0c"/></linearGradient>
<linearGradient id="gT" x1="0" y1="0" x2="0" y2="1"><stop offset="0" stop-color="#6ae86a"/><stop offset="1" stop-color="#14a814"/></linearGradient>
<linearGradient id="gO" x1="0" y1="0" x2="0" y2="1"><stop offset="0" stop-color="#ffd6a0"/><stop offset="1" stop-color="#ffac58"/></linearGradient>
<linearGradient id="gB" x1="0" y1="0" x2="0" y2="1"><stop offset="0" stop-color="#fff6c8"/><stop offset="1" stop-color="#f8d070"/></linearGradient>
<radialGradient id="gL" cx="0.35" cy="0.35" r="0.7"><stop offset="0" stop-color="#ffffff"/><stop offset="1" stop-color="#7cc0f0"/></radialGradient>
<radialGradient id="gR" cx="0.4" cy="0.3" r="0.8"><stop offset="0" stop-color="#ff6a50"/><stop offset="1" stop-color="#c81808"/></radialGradient>
</defs>
<path d="M4.8 10.5 L11.2 5 L11.2 8.6 L17.8 8.6 L17.8 12.6 L11.2 12.6 L11.2 16.2 Z" fill="url(#gA)" stroke="#139013" stroke-width="0.5"/>
<rect x="2.5" y="20.5" width="17.5" height="17.5" fill="url(#gO)" stroke="#b8b4c0" stroke-width="1"/>
<circle cx="9.3" cy="27.3" r="3.9" fill="url(#gL)" stroke="#3c86d0" stroke-width="1.1"/>
<line x1="12.2" y1="30.2" x2="16.8" y2="34.8" stroke="#c82828" stroke-width="1.8" stroke-linecap="round"/>
<rect x="5.5" y="42" width="12.5" height="3.6" rx="1.2" fill="url(#gB)" stroke="#d8962e" stroke-width="1"/>
<rect x="5.5" y="50.5" width="12.5" height="3.6" rx="1.2" fill="url(#gB)" stroke="#d8962e" stroke-width="1"/>
<path d="M6.9 43 L15.5 43 L11.2 47.6 Z" fill="url(#gT)"/>
<path d="M6.9 53 L15.5 53 L11.2 48.2 Z" fill="url(#gT)"/>
<rect x="5.5" y="62.5" width="12.5" height="3.6" rx="1.2" fill="url(#gB)" stroke="#d8962e" stroke-width="1"/>
<rect x="5.5" y="68.2" width="12.5" height="3.6" rx="1.2" fill="url(#gB)" stroke="#d8962e" stroke-width="1"/>
<path d="M6.9 65.2 L15.5 65.2 L11.2 60 Z" fill="url(#gT)"/>
<path d="M6.9 68.6 L15.5 68.6 L11.2 74 Z" fill="url(#gT)"/>
<line x1="6.5" y1="78.5" x2="18.5" y2="78.5" stroke="#a8a8a8" stroke-width="1"/>
<rect x="5.5" y="84.5" width="5.5" height="5.5" fill="#dce8f8" stroke="#5a78a8" stroke-width="1"/>
<rect x="7.5" y="86.5" width="1.6" height="1.6" fill="#707880"/>
<path d="M11 86.5 L12.5 86.5 L12.5 88.5" fill="none" stroke="#9090a0" stroke-width="0.6"/>
<rect x="12" y="89" width="4" height="2.4" rx="0.6" fill="#e8b828" stroke="#b08818" stroke-width="0.4"/>
<rect x="12" y="92.4" width="4" height="2.4" rx="0.6" fill="#e8b828" stroke="#b08818" stroke-width="0.4"/>
<rect x="12" y="96" width="4" height="2.4" rx="0.6" fill="#e8b828" stroke="#b08818" stroke-width="0.4"/>
<line x1="16" y1="90.2" x2="19" y2="90.2" stroke="#707070" stroke-width="0.7"/><line x1="16" y1="93.6" x2="19" y2="93.6" stroke="#707070" stroke-width="0.7"/><line x1="16" y1="97.2" x2="19" y2="97.2" stroke="#707070" stroke-width="0.7"/>
<circle cx="11.8" cy="110" r="6.7" fill="url(#gR)" stroke="#b01808" stroke-width="0.5"/>
<path d="M11 106 L12.8 106 L12.4 113 L11.4 113 Z" fill="#fff"/><rect x="11" y="114" width="1.8" height="1.6" fill="#fff"/>
</svg>
<div style="left:0px;top:333.0px;width:2px;height:2px;background:#9a9a9a;"></div>
<div style="left:0px;top:336.5px;width:2px;height:2px;background:#9a9a9a;"></div>
<div style="left:0px;top:340.0px;width:2px;height:2px;background:#9a9a9a;"></div>
<div style="left:0px;top:343.5px;width:2px;height:2px;background:#9a9a9a;"></div>
<div style="left:0px;top:347.0px;width:2px;height:2px;background:#9a9a9a;"></div>
<div style="left:0px;top:350.5px;width:2px;height:2px;background:#9a9a9a;"></div>
<div style="left:0px;top:354.0px;width:2px;height:2px;background:#9a9a9a;"></div>
<div style="left:0px;top:357.5px;width:2px;height:2px;background:#9a9a9a;"></div>
<div style="left:0px;top:361.0px;width:2px;height:2px;background:#9a9a9a;"></div>
<svg style="position:absolute;left:740px;top:636px" width="160" height="60">
<defs><filter id="sh" x="-20%" y="-20%" width="150%" height="150%"><feDropShadow dx="0.9" dy="0.9" stdDeviation="0.7" flood-color="#6e6e6e" flood-opacity="0.8"/></filter></defs>
<g filter="url(#sh)">
<circle cx="30.5" cy="33.7" r="17.6" fill="#ffffff" stroke="#e2e2e2" stroke-width="0.8"/>
<path d="M22 19 C28 16.5 36.5 13.5 38.4 7.2 C40.2 10.5 41.6 14.5 41.2 18.2 L46 24 L30 24 Z" fill="#ffffff"/>
</g>
<g fill="none" stroke="#a9a9a9" stroke-width="1.1" stroke-linecap="round">
<path d="M38.6 8 C40.4 11.5 41.4 15 40.8 18.6 C39.5 21 37.5 22 35.2 22.4 L21.4 32"/>
<circle cx="19.7" cy="32.8" r="2.1" fill="#fff"/><circle cx="39.9" cy="32.8" r="2.1" fill="#fff"/>
<path d="M38.2 34.2 L24.4 44.8 C22.5 46.3 20 46.8 16.5 46.6"/>
</g>
<g filter="url(#sh)" fill="none" stroke="#ffffff" stroke-width="2.4" stroke-linecap="round" stroke-linejoin="round" transform="translate(54,0) scale(0.957,1) translate(-56,0)">
<path d="M56 21 L56 32 M56 21 L67 21 L66 31 L56 31 M56 26 L66 26 M61 17 L61 34 Q62 36 68 35"/>
<path d="M73 20 L85 20 L79 25 M72 27 L87 26 M79 25 L79 34 Q78 36 75 35"/>
<path d="M94 18 L92 24 L106 23 M100 17 Q100 30 91 35 M97 27 L104 27 Q101 33 94 35 M98 29 Q102 33 107 35 M104 18 L106 20"/>
<path d="M111 20 L111 34 M109 24 L113 22 M114 21 L113 26 M116 20 L124 20 M120 17 L120 24 M115 24 L126 24 M117 27 L124 27 M118 27 Q118 33 114 35 M122 27 L122 33 Q123 35 127 34"/>
<path d="M131 22 L147 22 M138 17 Q136 30 129 35 M135 27 L144 27 Q140 33 132 36 M137 29 Q142 33 148 35"/>
</g>
</svg>
<div class="t" style="left:794px;top:673px;line-height:14px;font-size:12px;font-weight:bold;color:#ffffff;-webkit-text-stroke:0;transform:scaleX(0.915);text-shadow:1px 1px 1px #8a8a8a;">www.elecfans.com</div>
</body></html>
